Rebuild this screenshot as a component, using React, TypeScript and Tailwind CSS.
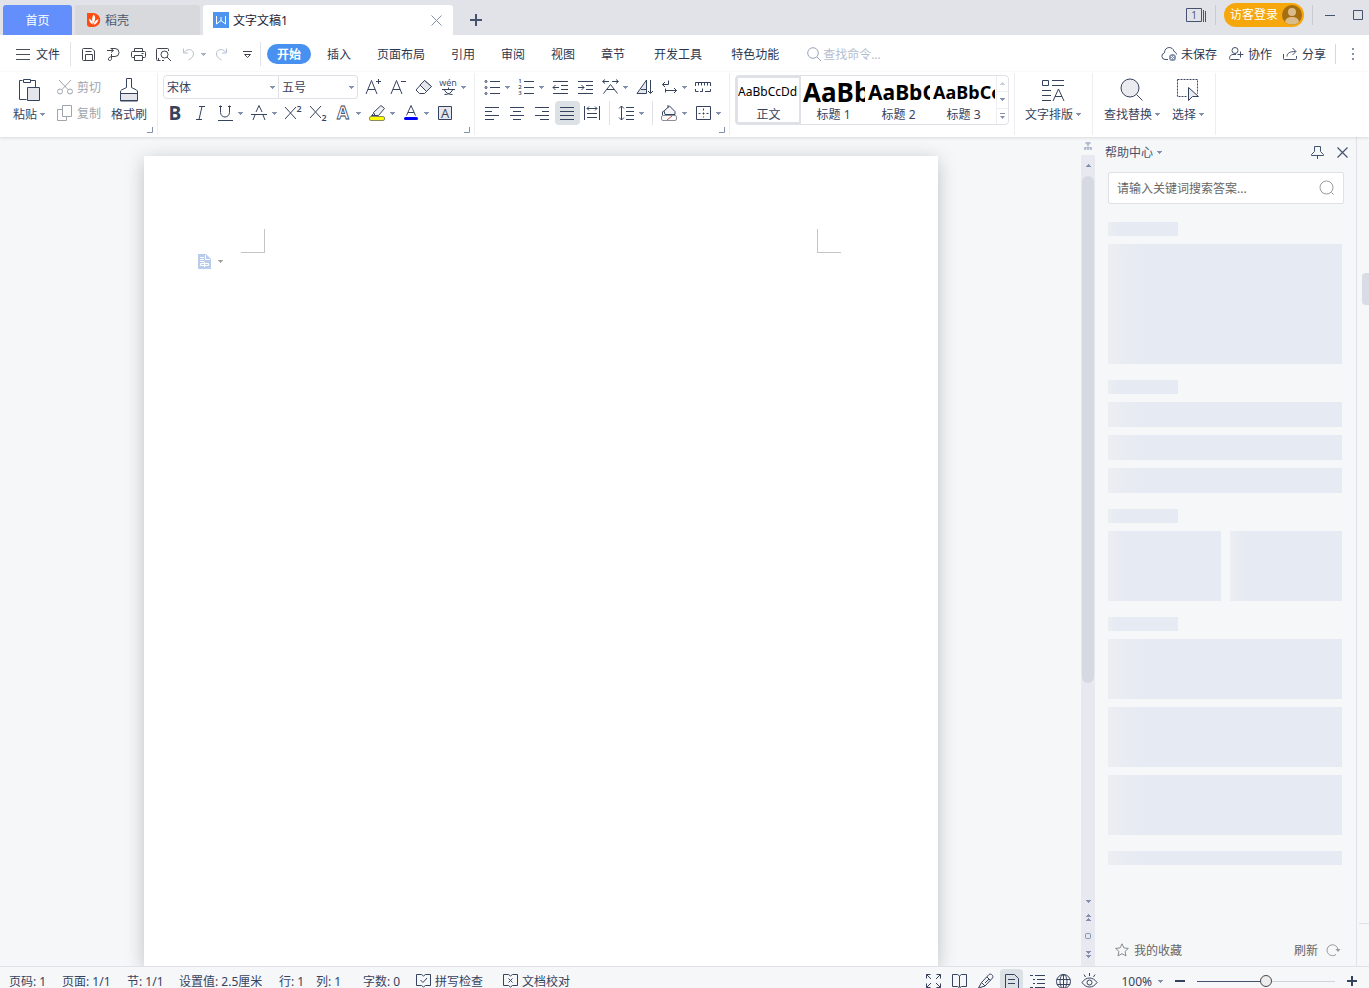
import clsx from "clsx"
import { ReactNode } from "react"


type ChildrenProps = {
    children: ReactNode
}

type IconProps = {
    w?: number,
    h?: number,
    className?: string,
    children: ReactNode
}

type ToolProps = {
    label: string,
    caret?: boolean,
    active?: boolean,
    children: ReactNode
}


function Icon({ w = 17, h = 18, className, children }: IconProps) {
    return (
        <svg width={w} height={h} viewBox={`0 0 ${w} ${h}`} fill="none" stroke="currentColor" className={clsx("shrink-0 overflow-visible", className)} aria-hidden="true">
            {children}
        </svg>
    )
}

function Letter({ x, y, size, weight = 400, children }: { x: number, y: number, size: number, weight?: number, children: string }) {
    return (
        <text x={x} y={y} fontSize={size} fontWeight={weight} textAnchor="middle" fill="currentColor" stroke="none" className="font-['Open_Sans','Noto_Sans',sans-serif]">{children}</text>
    )
}

function Caret({ className }: { className?: string }) {
    return (
        <svg width="5" height="3" viewBox="0 0 5 3" className={clsx("shrink-0", className || "text-[#8390ae]")} fill="currentColor" aria-hidden="true">
            <path d="M0 0h5v1H4v1H3v1H2V2H1V1H0z" />
        </svg>
    )
}

function Tool({ label, caret, active, children }: ToolProps) {
    return (
        <button aria-label={label} title={label} className={clsx("flex items-center h-6 shrink-0 rounded-sm", caret ? "w-[34px]" : "w-[25px]", active && "bg-[#dce1e6]")}>
            <span className="w-[25px] flex justify-center">{children}</span>
            {caret && <Caret />}
        </button>
    )
}

function Group({ children, corner = true }: { children: ReactNode, corner?: boolean }) {
    return (
        <div className="relative flex items-start h-[62px] pt-0.5 border-r border-[#eceef1] shrink-0">
            {children}
            {corner && (
                <button aria-label="更多设置" className="absolute right-1 bottom-0.5 text-[#8390ae]">
                    <Icon w={6} h={6}><path d="M5.500 0v5.500H0" /></Icon>
                </button>
            )}
        </div>
    )
}

function Separator() {
    return <span className="w-px h-6 mx-1 bg-[#dfe1e6]" />
}

function Align({ lines }: { lines: number[][] }) {
    return (
        <Icon>
            {lines.map(([start, end], index) => (
                <path key={index} d={`M${start} ${3.5 + index * 4}H${end}`} />
            ))}
        </Icon>
    )
}


function TitleBar() {
    return (
        <header className="flex h-[35px] bg-[#e1e3e8] pl-[3px] shrink-0">
            <div className="flex items-end gap-[3px]">
                <button className="w-[69px] h-[30px] rounded-t-[3px] bg-[#628ffb] text-white">首页</button>
                <button className="w-[125px] h-[30px] rounded-t-[3px] bg-[#d7d9dc] flex items-center gap-1 pl-3 text-[#4b566e]">
                    <Icon w={14} h={16}>
                        <path d="M0 1h6a7.300 7 0 0 1 0 14H3a3 3 0 0 1-3-3z" fill="#ff4b0f" stroke="none" />
                        <path d="M6.700 2.500C9 5 8.300 8 6.300 12 4.500 8.500 4.800 5 6.700 2.500zM2 6.500c2.400 1 3.700 3 3.800 6C3.500 11.500 2.200 9.500 2 6.500zM11.500 7c-.5 3-2 5-4.700 5.700C7 10 8.700 8 11.500 7z" fill="#fff" stroke="none" />
                    </Icon>
                    稻壳
                </button>
                <div className="w-[250px] h-[30px] rounded-t-[3px] bg-white flex items-center pl-2.5 pr-[11px] text-[#1c2333]">
                    <Icon w={16} h={16}>
                        <path d="M0 0h16v16H0z" fill="#4c94f0" stroke="none" />
                        <path d="M3.500 4v8l4.500-3.500 4.500 3.500V4M8 8.500V5" stroke="#fff" />
                    </Icon>
                    <span className="ml-1 flex-1">文字文稿1</span>
                    <button aria-label="关闭标签" className="text-[#8390ae]">
                        <Icon w={11} h={11}><path d="M.5.5l10 10M10.500.5l-10 10" /></Icon>
                    </button>
                </div>
            </div>
            <button aria-label="新建标签" className="ml-[17px] mt-[5px] text-[#46536f]">
                <Icon w={12} h={12}><path d="M6 0v12M0 6h12" strokeWidth="2" /></Icon>
            </button>
            <div className="ml-auto flex items-center h-[29px] pr-1.5 text-[#46536f]">
                <button aria-label="窗口列表">
                    <Icon w={21} h={14}>
                        <path d="M.5.5h15v13H.5zM17.500 2v12M19.500 3v11" />
                        <Letter x={8} y={11} size={10}>1</Letter>
                    </Icon>
                </button>
                <span className="w-px h-5 ml-2 bg-[#c9ccd3]" />
                <button className="ml-2 w-20 h-6 pl-1.5 pr-0.5 flex items-center justify-between rounded-full bg-[#f5a70b] text-white">
                    访客登录
                    <svg width="20" height="20" viewBox="0 0 20 20" aria-hidden="true">
                        <circle cx="10" cy="10" r="10" fill="#a56e10" />
                        <circle cx="10" cy="7" r="4" fill="#dcbb8b" />
                        <path d="M3 17c.4-3.500 3-5 7-5s6.600 1.500 7 5a10 10 0 0 1-14 0z" fill="#dcbb8b" />
                    </svg>
                </button>
                <span className="w-px h-5 ml-2 bg-[#c9ccd3]" />
                <button aria-label="最小化" className="ml-3">
                    <Icon w={10} h={10}><path d="M0 5.500h10" /></Icon>
                </button>
                <button aria-label="最大化" className="ml-[18px]">
                    <Icon w={10} h={10}><path d="M.5.5h9v9h-9z" /></Icon>
                </button>
            </div>
        </header>
    )
}


const menus = [
    { title: "插入", space: "ml-4" },
    { title: "页面布局", space: "ml-[26px]" },
    { title: "引用", space: "ml-[26px]" },
    { title: "审阅", space: "ml-[26px]" },
    { title: "视图", space: "ml-[26px]" },
    { title: "章节", space: "ml-[26px]" },
    { title: "开发工具", space: "ml-[29px]" },
    { title: "特色功能", space: "ml-[29px]" },
]

function MenuBar() {
    return (
        <nav className="flex items-center h-[37px] pl-4 pr-[15px] pt-px shrink-0 whitespace-nowrap text-[#2b3750]">
            <button className="flex items-center gap-1.5">
                <Icon w={14} h={12} className="text-[#4a4f5c]"><path d="M0 1.500h14M0 6.500h14M0 11.500h14" /></Icon>
                文件
            </button>
            <span className="w-px h-6 ml-2.5 bg-[#e1e3e8]" />
            <div className="flex items-center ml-[5px] text-[#42454e]">
                <Tool label="保存">
                    <Icon w={15} h={15}>
                        <path d="M1.500 12.500v-10a1 1 0 0 1 1-1H11l2.500 2.500v8.500a1 1 0 0 1-1 1h-10a1 1 0 0 1-1-1M4.500 13.500V7.500h7v6M4.500 4.500h6" />
                    </Icon>
                </Tool>
                <Tool label="输出为PDF">
                    <Icon w={15} h={15}>
                        <path d="M4.500 1.500h4.500a4 4 0 0 1 0 8H5.500M1 3.500h6M5 1.500l2.500 2L5 5.500M5.500 7v4.500c0 2-1.500 2.500-3 1.500-.7-2 1-3 3.500-3.500" />
                    </Icon>
                </Tool>
                <Tool label="打印">
                    <Icon w={15} h={15}>
                        <path d="M3.500 4.500v-3h8v3M3.500 10.500h-2a1 1 0 0 1-1-1v-4a1 1 0 0 1 1-1h12a1 1 0 0 1 1 1v4a1 1 0 0 1-1 1h-2M3.500 8.500h8v5h-8zM10.500 6.500h2" />
                    </Icon>
                </Tool>
                <Tool label="打印预览">
                    <Icon w={15} h={15}>
                        <path d="M4.500 13.500h-3a1 1 0 0 1-1-1v-10a1 1 0 0 1 1-1h10a1 1 0 0 1 1 1V4M2.500 11v2.500M6 13.500h2" />
                        <circle cx="8.500" cy="7.500" r="3.500" /><path d="M11 10l4 4" />
                    </Icon>
                </Tool>
                <button aria-label="撤销" className="flex items-center w-[34px] h-6 pl-1.5 text-[#b8c0d0]">
                    <Icon w={13} h={14}><path d="M1.500 1.500v4.500H6M2 5.500C5 1 11.500 2 11.500 7c0 3-2.500 4.500-5 6" /></Icon>
                    <Caret className="ml-1.5 text-[#a6b0c6]" />
                </button>
                <button aria-label="恢复" className="ml-[3px] w-[25px] h-6 pl-0.5 text-[#b8c0d0]">
                    <Icon w={13} h={14}><path d="M11.500 1.500v4.500H7M11 5.500C8 1 1.500 2 1.500 7c0 3 2.500 4.500 5 6" /></Icon>
                </button>
                <button aria-label="自定义快速访问" className="ml-[5px]">
                    <Icon w={9} h={9}><path d="M0 1.500h9M1.500 4.500h6L4.500 7.500z" /></Icon>
                </button>
            </div>
            <span className="w-px h-6 ml-2 bg-[#e1e3e8]" />
            <button className="ml-1.5 w-11 h-5 rounded-full bg-[#4891f0] text-white font-bold">开始</button>
            {menus.map(menu => (
                <button key={menu.title} className={menu.space}>{menu.title}</button>
            ))}
            <label className="ml-7 flex items-center gap-0.5 text-[#98a4bd]">
                <Icon w={14} h={14}><circle cx="6" cy="6" r="5.300" /><path d="M10 10l4 4" /></Icon>
                <input aria-label="查找命令" placeholder="查找命令..." className="w-[90px] outline-none placeholder:text-[#b4bdd0]" />
            </label>
            <div className="ml-auto flex items-center">
                <button className="flex items-center gap-1">
                    <Icon w={16} h={16} className="text-[#46536f]">
                        <path d="M7 13.500H4A3.400 3.400 0 0 1 3.500 6.800C3.500 0 12 0 13 5.500c1.500.5 2.500 1.500 2.500 3" />
                        <circle cx="11.500" cy="11.500" r="3.500" fill="#8390ae" stroke="none" />
                        <path d="M10 10l3 3M13 10l-3 3" stroke="#fff" />
                    </Icon>
                    未保存
                </button>
                <button className="ml-3 flex items-center gap-1">
                    <Icon w={15} h={14} className="text-[#46536f]">
                        <circle cx="6" cy="3.500" r="3" /><path d="M10.500 12.500h-9c-.6 0-1-.4-1-1 0-3 2-4 3.500-4h3M11.500 4.500v6M8.500 7.500h6" />
                    </Icon>
                    协作
                </button>
                <button className="ml-[11px] flex items-center gap-[5px]">
                    <Icon w={14} h={14} className="text-[#46536f]">
                        <path d="M.5 7v4.500a1 1 0 0 0 1 1h11a1 1 0 0 0 1-1V9M4 9.500C4 6 7 4.500 12.500 4.500M9.500 1l3.500 3.500L9.500 8" />
                    </Icon>
                    分享
                </button>
                <span className="w-px h-5 ml-[9px] bg-[#d5d8de]" />
                <button aria-label="更多" className="ml-4">
                    <Icon w={2} h={12} className="text-[#8390ae]"><path d="M1 0v2M1 5v2M1 10v2" strokeWidth="2" /></Icon>
                </button>
            </div>
        </nav>
    )
}


function BigButton({ title, caret = true, className, children }: { title: string, caret?: boolean, className?: string, children: ReactNode }) {
    return (
        <button className={clsx("flex flex-col items-center shrink-0 pt-0.5", className)}>
            {children}
            <span className="flex items-center gap-[3px] mt-[5px]">
                {title}
                {caret && <Caret />}
            </span>
        </button>
    )
}

function FontSelect({ label, value, className }: { label: string, value: string, className: string }) {
    return (
        <div className={clsx("flex items-center h-6 pr-[3px] border border-[#dfe1e6]", className)}>
            <select aria-label={label} defaultValue={value} className="appearance-none flex-1 min-w-0 h-full pl-[3px] outline-none">
                <option>{value}</option>
            </select>
            <Caret />
        </div>
    )
}

function FontGroup() {
    return (
        <Group>
            <div className="flex flex-col gap-0.5 pl-[5px] pr-1">
                <div className="flex">
                    <FontSelect label="字体" value="宋体" className="w-[116px] rounded-l-sm" />
                    <FontSelect label="字号" value="五号" className="w-[79px] rounded-r-sm border-l-0" />
                    <div className="flex ml-[3px]">
                        <Tool label="增大字号">
                            <Icon><path d="M1 16L6.500 2.500 12 16M3 11.500h7M13.500 1v5M11 3.500h5" /></Icon>
                        </Tool>
                        <Tool label="减小字号">
                            <Icon><path d="M1 16L6.500 2.500 12 16M3 11.500h7M11 3.500h5" /></Icon>
                        </Tool>
                        <Tool label="清除格式">
                            <Icon>
                                <path d="M9.500 2.500l7 6-7 7h-5L1 12z" />
                                <path d="M9.500 2.500l7 6-5 5-6.500-6.500z" fill="#e4e6eb" />
                            </Icon>
                        </Tool>
                        <Tool label="拼音指南" caret>
                            <Icon>
                                <Letter x={8} y={8} size={9}>wén</Letter>
                                <path d="M2 11.500h13M8.500 9.500v2M4.500 12c1.500 3 4 4.500 8 4.500M12.500 12c-1.500 3-4 4.500-8 4.500" />
                            </Icon>
                        </Tool>
                    </div>
                </div>
                <div className="flex">
                    <Tool label="加粗">
                        <Icon><Letter x={8} y={16} size={19} weight={700}>B</Letter></Icon>
                    </Tool>
                    <Tool label="倾斜">
                        <Icon><path d="M7 2.500h6M4 15.500h6M10 2.500L7 15.500" /></Icon>
                    </Tool>
                    <Tool label="下划线" caret>
                        <Icon><path d="M3.500 1.500v7a4.500 4.500 0 0 0 9 0v-7M2 2.500h3M11 2.500h3M1 16.500h15" /></Icon>
                    </Tool>
                    <Tool label="删除线" caret>
                        <Icon><path d="M0 10.500h16M8 1.500L5 8M8 1.500L11 8M4 11l-2 5M12 11l2 5" /></Icon>
                    </Tool>
                    <Tool label="上标">
                        <Icon><path d="M0 3l11 12M11 3L0 15" /><Letter x={14} y={8} size={9} weight={600}>2</Letter></Icon>
                    </Tool>
                    <Tool label="下标">
                        <Icon><path d="M0 2l11 12M11 2L0 14" /><Letter x={14} y={17} size={9} weight={600}>2</Letter></Icon>
                    </Tool>
                    <Tool label="文字效果" caret>
                        <Icon>
                            <text x="8" y="15" fontSize="17" fontWeight="700" textAnchor="middle" fill="#fff" strokeWidth="0.800">A</text>
                        </Icon>
                    </Tool>
                    <Tool label="突出显示" caret>
                        <Icon>
                            <path d="M12 1.500l3.500 3-6 7H6l-1.500-3zM6 11.500H2.500L5 9" fill="#f1f2f5" />
                            <rect x=".5" y="12.500" width="15" height="4" rx="1.500" fill="#ff0" stroke="#8a8a5c" />
                        </Icon>
                    </Tool>
                    <Tool label="字体颜色" caret>
                        <Icon>
                            <path d="M3.500 11.500L8 1.500l4.500 10M5 8.500h6" />
                            <rect x="1" y="13" width="14" height="3" rx="1.500" fill="#00f" stroke="none" />
                        </Icon>
                    </Tool>
                    <Tool label="字符底纹">
                        <Icon>
                            <path d="M1.500 2.500h13v13h-13z" fill="#e6e8ed" />
                            <Letter x={8} y={14} size={13}>A</Letter>
                        </Icon>
                    </Tool>
                </div>
            </div>
        </Group>
    )
}

function ParagraphGroup() {
    return (
        <Group>
            <div className="flex flex-col gap-0.5 pl-[5px] pr-1">
                <div className="flex">
                    <Tool label="项目符号" caret>
                        <Icon>
                            <circle cx="2" cy="3.500" r="1" /><circle cx="2" cy="9.500" r="1" /><circle cx="2" cy="15.500" r="1" />
                            <path d="M6 3.500h10M6 9.500h10M6 15.500h10" />
                        </Icon>
                    </Tool>
                    <Tool label="编号" caret>
                        <Icon>
                            <Letter x={2} y={5} size={6} weight={600}>1</Letter><Letter x={2} y={11} size={6} weight={600}>2</Letter><Letter x={2} y={17} size={6} weight={600}>3</Letter>
                            <path d="M6 3.500h10M6 9.500h10M6 15.500h10" />
                        </Icon>
                    </Tool>
                    <Tool label="减少缩进量">
                        <Icon><path d="M1 3.500h15M9 7.500h7M9 11.500h7M1 15.500h15M1 9.500h6M3.500 7L1 9.500 3.500 12" /></Icon>
                    </Tool>
                    <Tool label="增加缩进量">
                        <Icon><path d="M1 3.500h15M9 7.500h7M9 11.500h7M1 15.500h15M1 9.500h6M4.500 7L7 9.500 4.500 12" /></Icon>
                    </Tool>
                    <Tool label="中文版式" caret>
                        <Icon><path d="M1 3.500h6M3 1.500l-2.500 2 2.500 2M10 3.500h6M14 1.500l2.500 2-2.500 2M1.500 15.500l7-9 7 9M5 11.500h7" /></Icon>
                    </Tool>
                    <Tool label="排序">
                        <Icon>
                            <path d="M1 15.500h9.500V2z" fill="#e4e6eb" /><path d="M5 11.500h5M14.500 2v13M12 13l2.500 2.500L17 13" />
                        </Icon>
                    </Tool>
                    <Tool label="显示编辑标记" caret>
                        <Icon><path d="M7.500 2.500v4h-6M4 4L1.500 6.500 4 9M4.500 12.500h11M13 10l2.500 2.500L13 15M4.500 10.500v4" /></Icon>
                    </Tool>
                    <Tool label="制表位">
                        <Icon>
                            <path d="M.5 8V4.500h15V8M3.500 4.500v3M6.500 4.500v3M9.500 4.500v3M12.500 4.500v3M.5 11v2.500h3M5 13.500h2.500M7.500 10.500v3M10 13.500h5.500V11" />
                        </Icon>
                    </Tool>
                </div>
                <div className="flex">
                    <Tool label="左对齐"><Align lines={[[1, 15], [1, 8], [1, 15], [1, 10]]} /></Tool>
                    <Tool label="居中对齐"><Align lines={[[1, 15], [4, 12], [1, 15], [4, 12]]} /></Tool>
                    <Tool label="右对齐"><Align lines={[[1, 15], [8, 15], [1, 15], [6, 15]]} /></Tool>
                    <Tool label="两端对齐" active><Align lines={[[1, 15], [1, 15], [1, 15], [1, 15]]} /></Tool>
                    <Tool label="分散对齐">
                        <Icon><path d="M.5 2v14M15.500 2v14M3 4.500h10M5 2.500l-2 2 2 2M11 2.500l2 2-2 2M3 9.500h10M3 13.500h10" /></Icon>
                    </Tool>
                    <Separator />
                    <Tool label="行距" caret>
                        <Icon><path d="M3.500 2v14M1 4.500L3.500 2 6 4.500M1 13.500L3.500 16 6 13.500M8 3.500h8M8 7.500h8M8 11.500h8M8 15.500h8" /></Icon>
                    </Tool>
                    <Separator />
                    <Tool label="底纹颜色" caret>
                        <Icon>
                            <path d="M7 1v3M3 7l5.500-5 5.500 5.500v3H4z" fill="#f4f5f7" /><path d="M3 6.500L1.500 8v3" />
                            <rect x=".5" y="11.500" width="15" height="5" rx="1.500" fill="#fff" stroke="#8b8f99" /><path d="M6 16l5-4" stroke="#e5483e" />
                        </Icon>
                    </Tool>
                    <Tool label="边框" caret>
                        <Icon>
                            <path d="M1.500 2.500h14v13h-14z" /><path d="M8.500 4.500v9M3.500 9.500h10" strokeDasharray="2 2" />
                        </Icon>
                    </Tool>
                </div>
            </div>
        </Group>
    )
}


const styles = [
    { title: "正文", preview: "AaBbCcDd", size: "text-xs/[32px]", active: true },
    { title: "标题 1", preview: "AaBb", size: "text-[26px]/[32px] font-bold" },
    { title: "标题 2", preview: "AaBbC", size: "text-[21px]/[32px] font-bold" },
    { title: "标题 3", preview: "AaBbCc", size: "text-[18px]/[32px] font-bold" },
]

function StyleGroup() {
    return (
        <Group corner={false}>
            <div className="flex h-[50px] mx-[5px] rounded-sm border border-[#dfe1e6]">
                {styles.map(style => (
                    <button key={style.title} className={clsx("flex flex-col w-[65px] overflow-hidden", style.active && "outline-2 -outline-offset-2 outline-[#dfe1e6]")}>
                        <span className={clsx("h-[30px] pl-0.5 text-left text-black whitespace-nowrap w-[64px] overflow-hidden", style.size)}>
                            {style.preview}
                        </span>
                        <span className="w-full text-center">{style.title}</span>
                    </button>
                ))}
                <div className="flex flex-col w-3 border-l border-[#eceef1] divide-y divide-[#eceef1]">
                    <button aria-label="上一行" className="flex-1 flex items-center justify-center"><Caret className="rotate-180 text-[#c9cfdb]" /></button>
                    <button aria-label="下一行" className="flex-1 flex items-center justify-center"><Caret /></button>
                    <button aria-label="全部样式" className="flex-1 flex items-center justify-center text-[#8390ae]">
                        <Icon w={5} h={6}><path d="M0 .5h5" /><path d="M0 3h5L2.500 6z" fill="currentColor" stroke="none" /></Icon>
                    </button>
                </div>
            </div>
        </Group>
    )
}

function Ribbon() {
    return (
        <div className="relative flex items-start h-[65px] pt-px pl-2 shrink-0 whitespace-nowrap text-[#36435f] shadow-[0_1px_3px_rgba(0,0,0,0.12)]">
            <Group>
                <div className="flex pl-[5px] pr-2.5">
                    <BigButton title="粘贴">
                        <Icon w={22} h={24} className="mt-px -mb-px">
                            <path d="M4.500 2.500h-3v19h7M13 2.500h4.500v7" />
                            <path d="M5.500 1.500h7v3h-7z" /><path d="M9.500 9.500h12v13h-12z" fill="#e4e6eb" />
                        </Icon>
                    </BigButton>
                    <div className="flex flex-col gap-0.5 ml-3 text-[#a0a4ad]">
                        <button className="flex items-center gap-1 h-6">
                            <Icon w={16} h={16}>
                                <circle cx="3" cy="12.500" r="2.500" /><circle cx="13" cy="12.500" r="2.500" /><path d="M2 1l9 9.500M14 1l-9 9.500" />
                            </Icon>
                            剪切
                        </button>
                        <button className="flex items-center gap-1 h-6">
                            <Icon w={16} h={16}><path d="M5.500.5h9v11h-9zM5 4.500H.5v11h9V12" /></Icon>
                            复制
                        </button>
                    </div>
                    <BigButton title="格式刷" caret={false} className="ml-2.5">
                        <Icon w={20} h={24} className="mt-px -mb-px">
                            <path d="M7.500.5h5v9l5 2.500a2 2 0 0 1 1 2v9H1.500v-9a2 2 0 0 1 1-2l5-2.500z" />
                            <path d="M1.500 15.500h17v7h-17z" fill="#e4e6eb" />
                        </Icon>
                    </BigButton>
                </div>
            </Group>
            <FontGroup />
            <ParagraphGroup />
            <StyleGroup />
            <Group corner={false}>
                <BigButton title="文字排版" className="ml-2.5 mr-[11px]">
                    <Icon w={22} h={24} className="mt-px -mb-px">
                        <path d="M.5 2.500h6v5h-6zM10 2.500h12M10 7.500h12M0 12.500h9M0 17.500h9M0 22.500h9M11 23l5.500-12L22 23M13 18.500h7" />
                    </Icon>
                </BigButton>
            </Group>
            <Group corner={false}>
                <BigButton title="查找替换" className="ml-[11px]">
                    <Icon w={24} h={24} className="mt-px -mb-px">
                        <circle cx="10" cy="10" r="9" fill="#e9ebef" /><path d="M16.500 16.500l6 6" />
                    </Icon>
                </BigButton>
                <BigButton title="选择" className="ml-3 mr-[11px]">
                    <Icon w={24} h={24} className="mt-px -mb-px">
                        <path d="M1.500 1.500h20v17h-20z" strokeDasharray="2 1" />
                        <path d="M12.500 9.500v13l4-4h6z" fill="#e9ebef" stroke="#fff" strokeWidth="3" />
                        <path d="M12.500 9.500v13l4-4h6z" fill="#e9ebef" />
                    </Icon>
                </BigButton>
            </Group>
        </div>
    )
}


function Document() {
    return (
        <main className="flex-1 flex justify-center overflow-hidden">
            <div className="w-[794px] shrink-0 mt-[19px] bg-white shadow-[0_4px_18px_rgba(0,0,0,0.22)]">
                <div className="flex justify-between px-[97px] pt-[73px]">
                    <span className="size-6 border-r border-b border-[#c4c4c4]" />
                    <span className="size-6 border-l border-b border-[#c4c4c4]" />
                </div>
                <button aria-label="页面选项" className="flex items-center gap-[7px] ml-[54px] mt-px">
                    <svg width="13" height="15" viewBox="0 0 13 15" aria-hidden="true">
                        <path d="M0 0h8l5 5v10H0z" fill="#b9cceb" />
                        <path d="M7.500 1v4.500H12M2 3.500h4M2 5.500h4M2 7.500h4M2.500 9.500h8v2h-8zM6.500 8v5" fill="none" stroke="#fff" />
                    </svg>
                    <Caret className="text-[#a5a5a5]" />
                </button>
            </div>
        </main>
    )
}

function ScrollColumn() {
    return (
        <div className="w-3.5 shrink-0 flex flex-col items-center text-[#8390ae]">
            <Icon w={8} h={8} className="my-[5px] text-[#b4bdd0]">
                <path d="M1.500 0h5v2h-1v1h-3V2h-1zM3.500 3h1v2H8v3H6V6.500H5V8H3V6.500H2V8H0V5h3.500z" fill="currentColor" stroke="none" />
            </Icon>
            <div className="flex-1 w-full flex flex-col items-center bg-[#e8e9f0]">
                <button aria-label="向上滚动" className="h-[21px] flex items-center"><Caret className="rotate-180" /></button>
                <div className="w-3 h-[507px] shrink rounded-full bg-[#d6d9e2]" />
                <div className="mt-auto flex flex-col items-center pb-1">
                    <button aria-label="向下滚动" className="h-4 flex items-center"><Caret /></button>
                    <button aria-label="上一页" className="h-[17px] flex flex-col items-center justify-center gap-px"><Caret className="rotate-180" /><Caret className="rotate-180" /></button>
                    <button aria-label="选择浏览对象" className="h-5 flex items-center"><Icon w={6} h={6}><rect x=".5" y=".5" width="5" height="5" rx="1" /></Icon></button>
                    <button aria-label="下一页" className="h-4 flex flex-col items-center justify-center gap-px"><Caret /><Caret /></button>
                </div>
            </div>
        </div>
    )
}

function Bone({ className }: { className: string }) {
    return <div className={clsx("bg-linear-to-r from-[#ebeef2] to-[#e6eaf2] to-15%", className)} />
}

function Bones({ children }: ChildrenProps) {
    return (
        <div className="flex flex-col gap-2">
            <Bone className="w-[70px] h-3.5" />
            {children}
        </div>
    )
}

function HelpPanel() {
    return (
        <aside className="w-[261px] shrink-0 flex flex-col">
            <div className="flex items-center h-[30px] pl-2.5 pr-2 text-[#46536f]">
                <button className="flex items-center gap-1 flex-1">帮助中心<Caret /></button>
                <button aria-label="固定">
                    <Icon w={13} h={14}><path d="M3.500 1.500h6v5l3 3v1H.5v-1l3-3zM6.500 10.500V14" /></Icon>
                </button>
                <button aria-label="关闭" className="ml-[13px]">
                    <Icon w={11} h={11}><path d="M.5.5l10 10M10.500.5l-10 10" strokeWidth="1.200" /></Icon>
                </button>
            </div>
            <label className="flex items-center h-8 mt-[5px] ml-[13px] mr-3 px-2 rounded-xs border border-[#dfe1e6] bg-white text-[#9b9b9b]">
                <input aria-label="搜索答案" placeholder="请输入关键词搜索答案..." className="flex-1 min-w-0 outline-none placeholder:text-[#666]" />
                <Icon w={16} h={16}><circle cx="7.500" cy="7.500" r="6.500" /><path d="M12.500 12.500l2 2" /></Icon>
            </label>
            <div className="flex flex-col gap-4 mt-[18px] ml-[13px] mr-3.5">
                <Bones>
                    <Bone className="h-[120px]" />
                </Bones>
                <Bones>
                    <Bone className="h-[25px]" />
                    <Bone className="h-[25px]" />
                    <Bone className="h-[25px]" />
                </Bones>
                <Bones>
                    <div className="grid grid-cols-2 gap-[9px]">
                        <Bone className="h-[70px]" />
                        <Bone className="h-[70px]" />
                    </div>
                </Bones>
                <Bones>
                    <Bone className="h-[60px]" />
                    <Bone className="h-[60px]" />
                    <Bone className="h-[60px]" />
                </Bones>
                <Bone className="h-3.5" />
            </div>
            <div className="mt-auto flex items-center justify-between h-8 pl-5 pr-4 text-[#666]">
                <button className="flex items-center gap-[5px]">
                    <Icon w={14} h={14} className="text-[#8b8b8b]"><path d="M7 .8l1.900 4.100 4.500.5-3.300 3 .9 4.500L7 10.700 3 12.900l.9-4.500-3.300-3 4.500-.5z" /></Icon>
                    我的收藏
                </button>
                <button className="flex items-center gap-2">
                    刷新
                    <Icon w={14} h={14} className="text-[#9b9b9b]">
                        <path d="M10 11.500A5.500 5.500 0 1 1 12 7" /><path d="M9.500 6h5L12 9z" fill="currentColor" stroke="none" />
                    </Icon>
                </button>
            </div>
        </aside>
    )
}


const counters = [
    { title: "页码: 1", width: "w-[53px]" },
    { title: "页面: 1/1", width: "w-[65px]" },
    { title: "节: 1/1", width: "w-[52px]" },
    { title: "设置值: 2.5厘米", width: "w-[100px]" },
    { title: "行: 1", width: "w-[37px]" },
    { title: "列: 1", width: "w-[47px]" },
    { title: "字数: 0", width: "w-[53px]" },
]

function ViewButton({ label, active, children }: { label: string, active?: boolean, children: ReactNode }) {
    return (
        <button aria-label={label} title={label} className={clsx("w-[23px] h-6 flex items-center justify-center rounded-sm", active && "bg-[#dce1e6]")}>
            <Icon w={17} h={16}>{children}</Icon>
        </button>
    )
}

function StatusBar() {
    return (
        <footer className="h-[22px] shrink-0 overflow-hidden border-t border-[#dfe1e6] text-[#36435f] whitespace-nowrap">
            <div className="flex items-center h-7 pl-[9px] pr-3">
                {counters.map(counter => (
                    <span key={counter.title} className={counter.width}>{counter.title}</span>
                ))}
                <button className="flex items-center gap-1">
                    <Icon w={15} h={14}><path d="M.5.5h5l2 1.500 2-1.500h5v11h-5l-2 1.500-2-1.500h-5zM4.500 6l2.500 2.500 4-4.500" /></Icon>
                    拼写检查
                </button>
                <button className="flex items-center gap-1 ml-5">
                    <Icon w={15} h={14}><path d="M.5.5h5l2 1.500 2-1.500h5v11h-5l-2 1.500-2-1.500h-5zM5.500 4.500l4 4M9.500 4.500l-4 4" /></Icon>
                    文档校对
                </button>
                <div className="ml-auto flex items-center gap-[3px]">
                    <ViewButton label="全屏显示">
                        <path d="M1.500 5.500v-4h4M1.500 1.500L6 6M11.500 1.500h4v4M15.500 1.500L11 6M1.500 10.500v4h4M1.500 14.500L6 10M15.500 10.500v4h-4M15.500 14.500L11 10" />
                    </ViewButton>
                    <ViewButton label="阅读版式">
                        <path d="M1.500 1.500h5l2 1.500 2-1.500h5v12h-5l-2 1.500-2-1.500h-5zM8.500 3v11" />
                    </ViewButton>
                    <ViewButton label="写作模式">
                        <path d="M1.500 15l3-5.500L12 1.500c2-1.500 5 1.500 3.500 3.500L8 13l-6.500 2M4.500 9.500L8 13M10 4l3.500 3.500M8 10l4-4" />
                    </ViewButton>
                    <ViewButton label="页面视图" active>
                        <path d="M2.500 16v-14.500h9l4 4V16M5 6.500h7M5 10.500h7" />
                    </ViewButton>
                    <ViewButton label="大纲">
                        <path d="M1 2.500h3M6 2.500h10M4 6.500h2M8 6.500h8M4 10.500h2M8 10.500h8M1 14.500h3M6 14.500h10" />
                    </ViewButton>
                    <ViewButton label="Web版式">
                        <circle cx="8.500" cy="8.500" r="7" /><ellipse cx="8.500" cy="8.500" rx="3.500" ry="7" /><path d="M8.500 1.500v14M2 6.500h13M2 11.500h13" />
                    </ViewButton>
                    <ViewButton label="护眼模式">
                        <path d="M1 9.500c4-6 11-6 15 0-4 6-11 6-15 0zM8.500 0v3M3 1.500l1.500 2.500M14 1.500L12.500 4" /><circle cx="8.500" cy="9.500" r="2.500" />
                    </ViewButton>
                </div>
                <button className="ml-5 flex items-center gap-1.5">100%<Caret /></button>
                <button aria-label="缩小" className="ml-3"><Icon w={10} h={10}><path d="M0 5h10" strokeWidth="2" /></Icon></button>
                <input type="range" aria-label="显示比例" min="0" max="100" defaultValue="50" className="appearance-none w-[138px] h-px ml-3 bg-linear-to-r from-[#46536f] from-50% to-[#cfd3da] to-50% [&::-webkit-slider-thumb]:appearance-none [&::-webkit-slider-thumb]:size-3 [&::-webkit-slider-thumb]:rounded-full [&::-webkit-slider-thumb]:border [&::-webkit-slider-thumb]:border-[#46494f] [&::-webkit-slider-thumb]:bg-[#ededed]" />
                <button aria-label="放大" className="ml-3"><Icon w={10} h={10}><path d="M5 0v10M0 5h10" strokeWidth="2" /></Icon></button>
            </div>
        </footer>
    )
}


function App() {
    return (
        <div lang="zh-CN" className="h-screen flex flex-col overflow-hidden bg-white text-xs/[17px] font-['Noto_Sans','Noto_Sans_CJK_SC',sans-serif]">
            <TitleBar />
            <MenuBar />
            <Ribbon />
            <div className="flex-1 min-h-0 flex bg-[#f5f7f9]">
                <Document />
                <ScrollColumn />
                <HelpPanel />
                <div className="w-[13px] shrink-0 flex flex-col items-end border-l border-[#e1e3e8]">
                    <button aria-label="展开侧栏" className="w-[7px] h-8 mt-[136px] rounded-l-sm bg-[#d9dce4]" />
                    <span className="w-2.5 h-px mt-auto mb-[42px] bg-[#dfe1e6]" />
                </div>
            </div>
            <div className="bg-[#f5f7f9]">
                <StatusBar />
            </div>
        </div>
    )
}

export default App
